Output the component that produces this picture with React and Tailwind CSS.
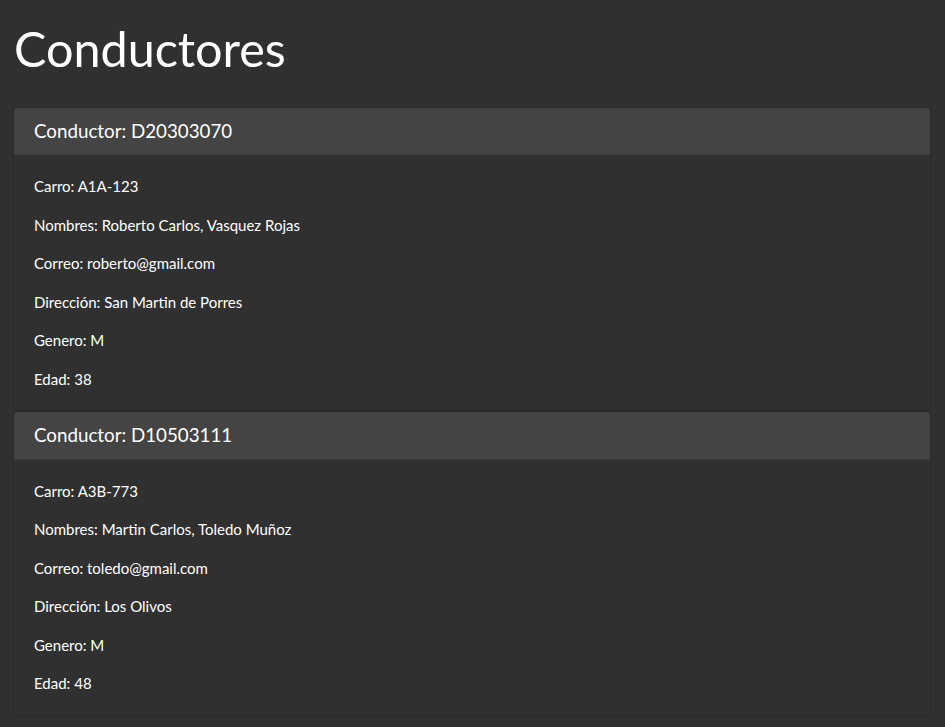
const conductores = [
  {
    codigo: "D20303070",
    carro: "A1A-123",
    nombres: "Roberto Carlos, Vasquez Rojas",
    correo: "roberto@gmail.com",
    direccion: "San Martin de Porres",
    genero: "M",
    edad: 38,
  },
  {
    codigo: "D10503111",
    carro: "A3B-773",
    nombres: "Martin Carlos, Toledo Muñoz",
    correo: "toledo@gmail.com",
    direccion: "Los Olivos",
    genero: "M",
    edad: 48,
  },
];

const App = () => {
  return (
    <div className="min-h-screen bg-[#303030] text-white pl-[13px] pr-[14px] font-['Lato','Liberation_Sans',sans-serif]">
      <h1 className="ml-px text-[48.5px] leading-[1.2] pt-[19px] mb-[29.4px] font-normal">Conductores</h1>
      <div>
        {conductores.map((c) => (
          <div key={c.codigo} className="bg-[#303030] border border-black/[0.125] rounded-[4px] overflow-hidden">
            <div className="bg-[#444] border-b border-black/[0.125] px-5 py-3">
              <h5 className="text-[18.75px] leading-[1.2]">Conductor: {c.codigo}</h5>
            </div>
            <div className="p-5 text-[15px] leading-[1.5]">
              <p className="mb-4">Carro: {c.carro}</p>
              <p className="mb-4">Nombres: {c.nombres}</p>
              <p className="mb-4">Correo: {c.correo}</p>
              <p className="mb-4">Dirección: {c.direccion}</p>
              <p className="mb-4">Genero: {c.genero}</p>
              <p>Edad: {c.edad}</p>
            </div>
          </div>
        ))}
      </div>
    </div>
  );
};

export default App;
